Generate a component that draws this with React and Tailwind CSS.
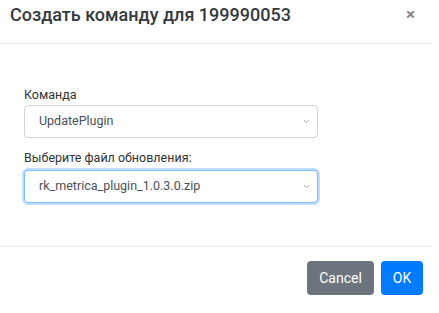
import { ChevronDown } from "lucide-react";

const Select = ({ value, focused }) => (
  <div
    className={`flex h-[33px] w-[294px] items-center justify-between rounded-[4px] border bg-white pl-[14px] pr-[6px] text-[12.5px] text-[#495057] ${
      focused
        ? "border-[#80bdff] shadow-[0_0_0_2px_rgba(0,123,255,0.25)]"
        : "border-[#ced4da]"
    }`}
  >
    <span>{value}</span>
    <ChevronDown size={9} strokeWidth={2} className="text-[#888]" />
  </div>
);

export default function App() {
  return (
    <div
      className="h-[313px] w-[439px] bg-white"
      style={{ fontFamily: "Roboto, 'Liberation Sans', sans-serif" }}
    >
      <div className="w-[432px]">
        {/* Header */}
        <div className="flex h-[44px] items-start justify-between border-b border-[#e9ecef] pt-[6px] pl-[10px] pr-[17px]">
          <h5 className="text-[18px] font-medium leading-none text-[#343a40]">
            Создать команду для 199990053
          </h5>
          <span className="text-[17px] font-bold leading-none text-[#888]">
            ×
          </span>
        </div>

        {/* Body */}
        <div className="px-[24px] pt-[41px] pb-[43px]">
          <label className="block text-[12.5px] leading-[20px] text-[#333]">
            Команда
          </label>
          <Select value="UpdatePlugin" />
          <label className="mt-[10px] block text-[12.5px] leading-[20px] text-[#333]">
            Выберите файл обновления:
          </label>
          <div className="mt-[2px]">
            <Select value="rk_metrica_plugin_1.0.3.0.zip" focused />
          </div>
        </div>

        {/* Footer */}
        <div className="flex justify-end gap-[7px] border-t border-[#e9ecef] pt-[14px] pr-[9px]">
          <button className="h-[34px] w-[67px] rounded-[4px] bg-[#6c757d] text-[14px] text-white">
            Cancel
          </button>
          <button className="h-[34px] w-[42px] rounded-[4px] bg-[#007bff] text-[14px] text-white">
            OK
          </button>
        </div>
      </div>
    </div>
  );
}
